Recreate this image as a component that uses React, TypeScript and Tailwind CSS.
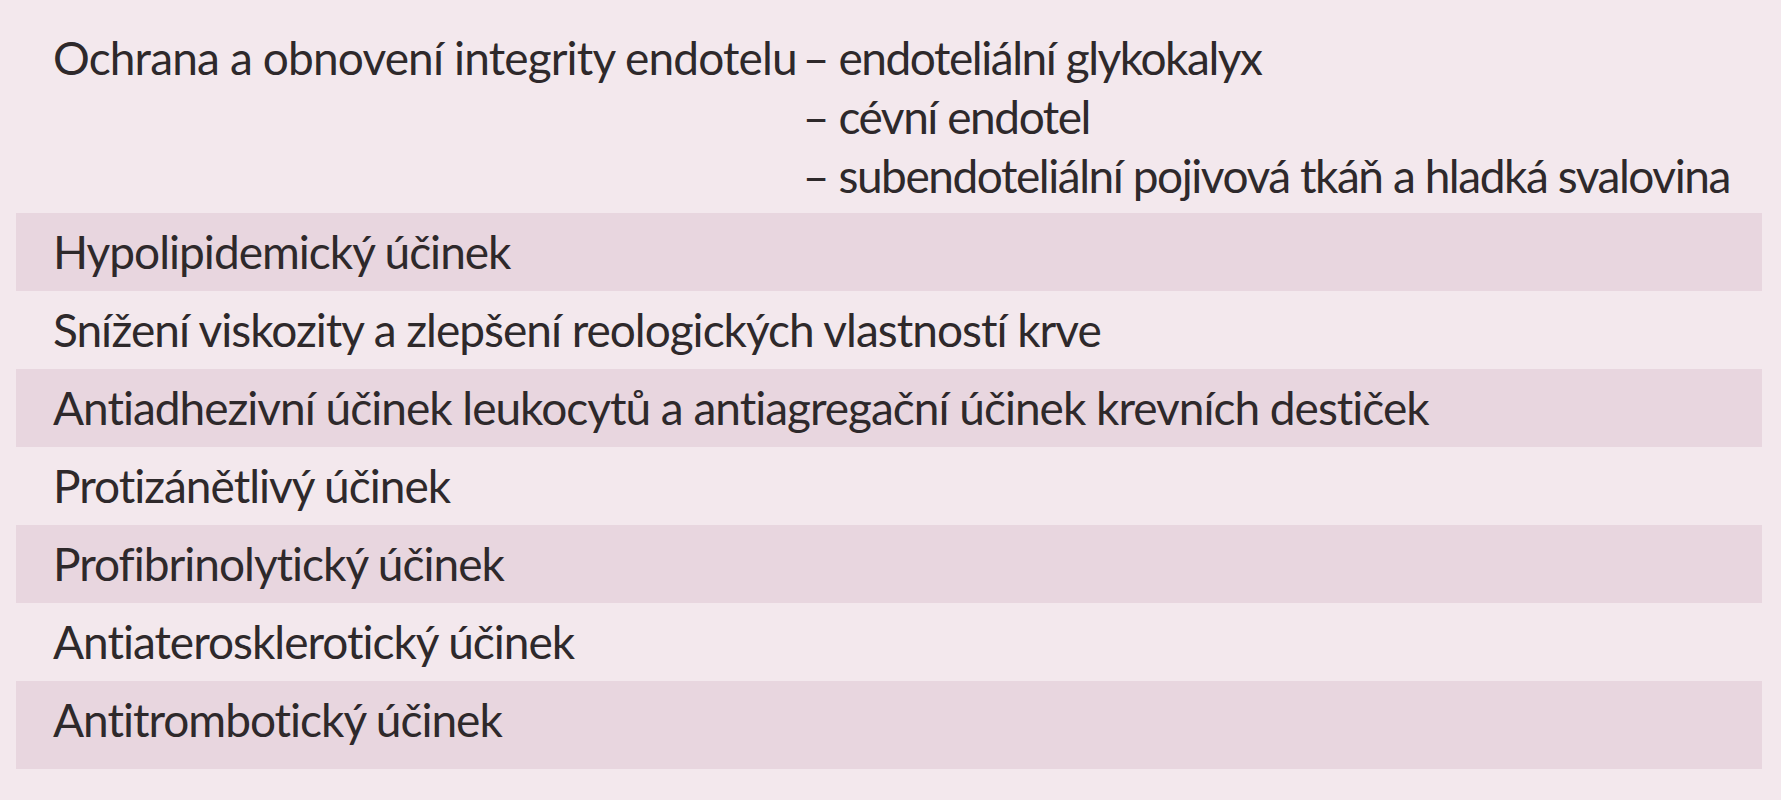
const rows = [
  'Hypolipidemický účinek',
  'Snížení viskozity a zlepšení reologických vlastností krve',
  'Antiadhezivní účinek leukocytů a antiagregační účinek krevních destiček',
  'Protizánětlivý účinek',
  'Profibrinolytický účinek',
  'Antiaterosklerotický účinek',
  'Antitrombotický účinek',
];

const subItems = [
  'endoteliální glykokalyx',
  'cévní endotel',
  'subendoteliální pojivová tkáň a hladká svalovina',
];

export default function App() {
  return (
    <div
      className="min-h-[800px] w-full bg-[#f3e8ed] text-[#2e292b] text-[46px] tracking-[-1px] whitespace-nowrap"
      style={{ fontFamily: 'Lato, "Open Sans", sans-serif' }}
    >
      <div className="ml-[16px] mr-[19px]">
        <div className="flex gap-[6px] pt-[28px] pb-[8px] pl-[37px] leading-[59px]">
          <div className="tracking-[-0.85px]">Ochrana a obnovení integrity endotelu</div>
          <div className="flex flex-col tracking-[-1.45px]">
            {subItems.map((item) => (
              <div key={item}>– {item}</div>
            ))}
          </div>
        </div>

        {rows.map((row, i) => (
          <div
            key={row}
            className={`pl-[37px] leading-[78px] ${i % 2 === 0 ? 'bg-[#e8d6df]' : ''} ${i === rows.length - 1 ? 'pb-[10px]' : ''}`}
          >
            {row}
          </div>
        ))}
      </div>
    </div>
  );
}
